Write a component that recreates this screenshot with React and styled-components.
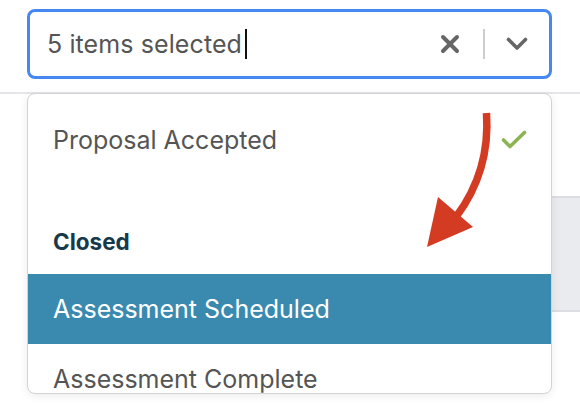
import React from "react";
import styled, { createGlobalStyle } from "styled-components";

const Global = createGlobalStyle`
  html, body { margin: 0; padding: 0; background: #ffffff; }
  body { font-family: Inter, "Noto Sans", "Liberation Sans", sans-serif; width: 580px; height: 406px; overflow: hidden; }
`;

const Page = styled.div`
  position: relative;
  width: 580px;
  height: 406px;
  overflow: hidden;
  background: #fff;
`;

const Header = styled.header`
  height: 94px;
  border-bottom: 2px solid #e4e6ea;
  padding: 9px 0 0 27px;
  box-sizing: border-box;
`;

const Content = styled.main`
  display: flex;
  justify-content: flex-end;
  padding-top: 102px;
`;

const Panel = styled.section`
  width: 300px;
  height: 112px;
  background: #eaebef;
  border-top: 2px solid #dcdde2;
  border-bottom: 2px solid #dcdde2;
  margin-right: -20px;
`;

const SelectWrap = styled.div`
  position: relative;
  width: 525px;
  z-index: 2;
`;

const Control = styled.div`
  display: flex;
  align-items: center;
  height: 70px;
  box-sizing: border-box;
  border: 3px solid #4688f1;
  border-radius: 8px;
  background: #fff;
  padding: 0 0 0 17px;
`;

const Value = styled.div`
  flex: 1;
  display: flex;
  align-items: center;
  font-size: 25px;
  color: #555555;
  letter-spacing: 0.1px;
`;

const Caret = styled.span`
  display: inline-block;
  width: 2px;
  height: 30px;
  background: #111;
  margin-left: 3px;
`;

const Indicators = styled.div`
  display: flex;
  align-items: center;
  height: 100%;
`;

const IconBtn = styled.div`
  display: flex;
  align-items: center;
  justify-content: center;
  width: ${(p) => p.$w}px;
  height: 100%;
`;

const Sep = styled.span`
  width: 2px;
  height: 30px;
  background: #cccccc;
`;

const Menu = styled.div`
  position: absolute;
  top: 84px;
  left: 0;
  width: 525px;
  height: 301px;
  box-sizing: border-box;
  border: 1px solid #d3d3d5;
  border-radius: 8px;
  background: #fff;
  box-shadow: 0 2px 10px rgba(0, 0, 0, 0.08);
  overflow: hidden;
`;

const List = styled.div`
  padding-top: 11px;
`;

const Option = styled.div`
  display: flex;
  align-items: center;
  justify-content: space-between;
  height: 70px;
  padding: 0 24px 0 25px;
  font-size: 25px;
  color: ${(p) => (p.$active ? "#ffffff" : "#555555")};
  background: ${(p) => (p.$active ? "#3a8ab0" : "transparent")};
`;

const Group = styled.div`
  padding-top: 51px;
`;

const GroupHeading = styled.div`
  height: 32px;
  line-height: 32px;
  padding-left: 25px;
  margin-bottom: 16px;
  font-size: 22.5px;
  font-weight: 700;
  color: #163a4a;
`;

const Annotation = styled.svg`
  position: absolute;
  left: 0;
  top: 0;
  z-index: 5;
  pointer-events: none;
`;

export default function App() {
  return (
    <Page>
      <Global />
      <Header>
        <SelectWrap>
          <Control>
            <Value>
              5 items selected
              <Caret />
            </Value>
            <Indicators>
              <IconBtn $w={66}>
                <svg width="20" height="20" viewBox="0 0 20 20">
                  <path d="M3 3 L17 17 M17 3 L3 17" stroke="#666" strokeWidth="4" strokeLinecap="round" fill="none" />
                </svg>
              </IconBtn>
              <Sep />
              <IconBtn $w={64}>
                <svg width="22" height="14" viewBox="0 0 22 14">
                  <path d="M2.5 2.5 L11 11 L19.5 2.5" stroke="#666" strokeWidth="3.6" strokeLinecap="round" strokeLinejoin="round" fill="none" />
                </svg>
              </IconBtn>
            </Indicators>
          </Control>
          <Menu>
            <List>
              <Option>
                Proposal Accepted
                <svg width="26" height="20" viewBox="0 0 26 20">
                  <path d="M2.5 10 L9 16.5 L23.5 2.5" stroke="#8db452" strokeWidth="3.6" strokeLinecap="round" strokeLinejoin="round" fill="none" />
                </svg>
              </Option>
              <Group>
                <GroupHeading>Closed</GroupHeading>
                <Option $active>Assessment Scheduled</Option>
                <Option>Assessment Complete</Option>
              </Group>
            </List>
          </Menu>
        </SelectWrap>
      </Header>
      <Content>
        <Panel />
      </Content>
      <Annotation width="580" height="406" viewBox="0 0 580 406">
        <path d="M486.5 113 C 489 150, 480 185, 456 217" stroke="#d33b22" strokeWidth="7.5" fill="none" />
        <polygon points="438,197 473,227 427,247" fill="#d33b22" />
      </Annotation>
    </Page>
  );
}
